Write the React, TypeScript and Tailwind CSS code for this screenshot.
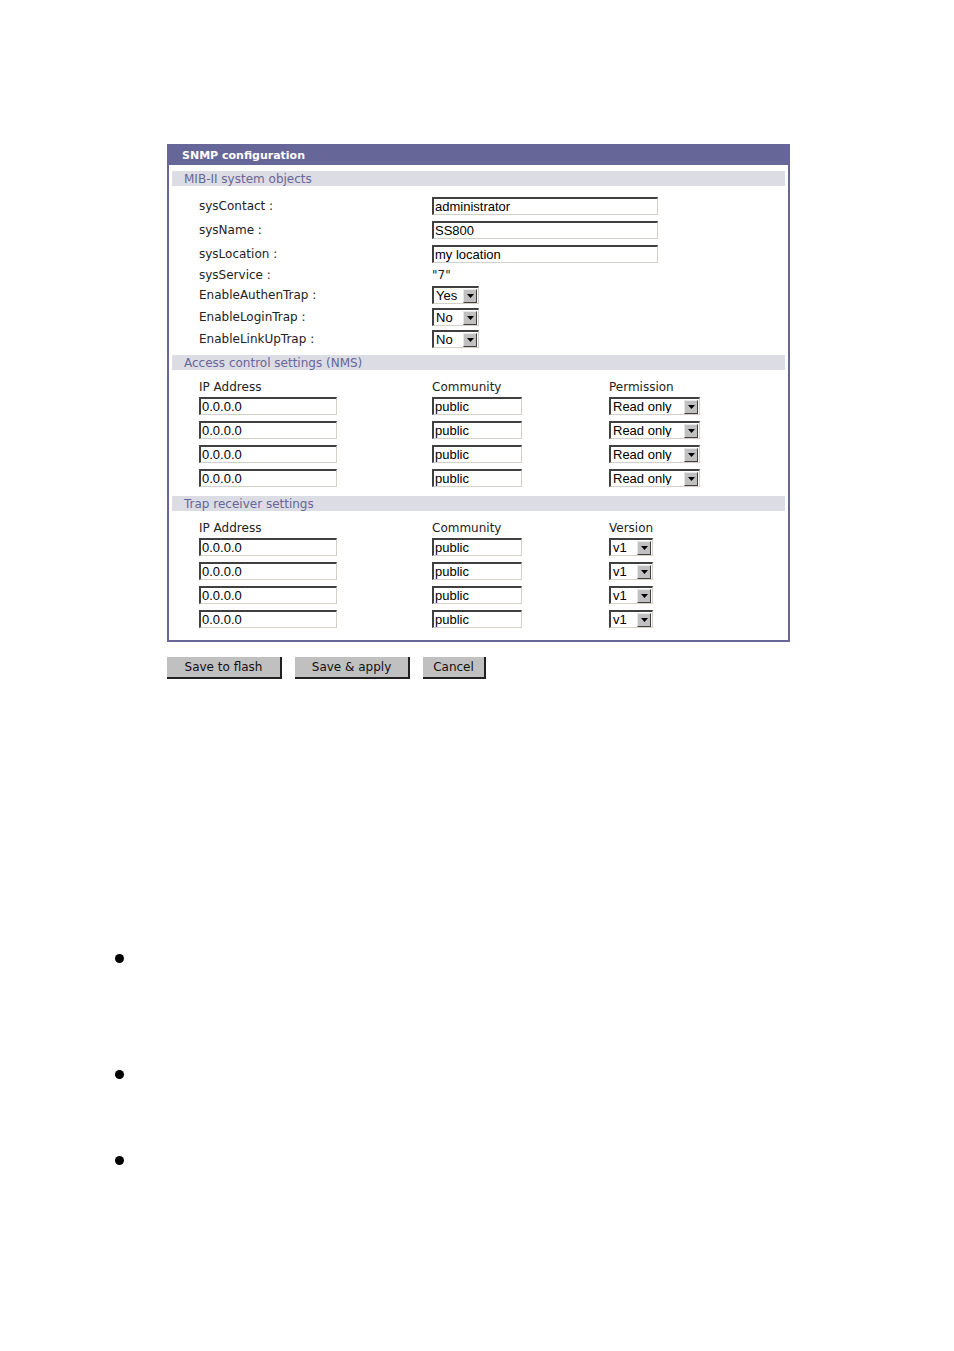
const label = "font-['DejaVu_Sans',sans-serif] text-[12px] text-[#222]";

function TextBox({ value, w }: { value: string; w: string }) {
  return (
    <div
      className={`${w} h-[18px] bg-white border-t-2 border-l-2 border-b border-r border-t-[#404040] border-l-[#404040] border-b-[#d4d0c8] border-r-[#d4d0c8] pl-[1px] flex items-center font-['Liberation_Sans',sans-serif] text-[13px] text-black leading-none overflow-hidden whitespace-nowrap`}
    >
      {value}
    </div>
  );
}

function Select({ value, w }: { value: string; w: string }) {
  return (
    <div
      className={`${w} h-[18px] bg-white border-t-2 border-l-2 border-b border-r border-t-[#404040] border-l-[#404040] border-b-[#d4d0c8] border-r-[#d4d0c8] flex items-center font-['Liberation_Sans',sans-serif] text-[13px] text-black leading-none`}
    >
      <span className="flex-1 pl-[2px] whitespace-nowrap overflow-hidden">{value}</span>
      <span className="w-[14px] h-[14px] mr-[1px] bg-[#c0c0c0] border-t border-l border-t-[#e8e8e8] border-l-[#e8e8e8] border-b border-r border-b-[#404040] border-r-[#404040] flex items-center justify-center">
        <svg width="7" height="4" viewBox="0 0 7 4">
          <polygon points="0,0 7,0 3.5,4" fill="#000" />
        </svg>
      </span>
    </div>
  );
}

function SectionBar({ title }: { title: string }) {
  return (
    <div className="h-[15px] bg-[#dcdce4] pl-[12px] flex items-center font-['DejaVu_Sans',sans-serif] text-[12px] text-[#666699] leading-none">
      {title}
    </div>
  );
}

function Button({ text, w }: { text: string; w: string }) {
  return (
    <div
      className={`${w} h-[22px] bg-[#c0c0c0] border-r-2 border-b-2 border-r-[#202020] border-b-[#202020] flex items-center justify-center font-['DejaVu_Sans',sans-serif] text-[12px] text-[#111]`}
    >
      {text}
    </div>
  );
}

const sysRows = [
  { l: "sysContact :", v: "administrator" },
  { l: "sysName :", v: "SS800" },
  { l: "sysLocation :", v: "my location" },
];

const trapRows = [
  { l: "EnableAuthenTrap :", v: "Yes" },
  { l: "EnableLoginTrap :", v: "No" },
  { l: "EnableLinkUpTrap :", v: "No" },
];

function Table({ third, thirdVal, thirdW }: { third: string; thirdVal: string; thirdW: string }) {
  return (
    <div className="pl-[30px]">
      <div className="h-[14px] flex items-center">
        <span className={`${label} w-[233px] text-[11px]`}>IP Address</span>
        <span className={`${label} w-[177px] text-[11px]`}>Community</span>
        <span className={`${label} text-[11px]`}>{third}</span>
      </div>
      {[0, 1, 2, 3].map((i) => (
        <div key={i} className="h-[24px] flex items-center">
          <div className="w-[233px]">
            <TextBox value="0.0.0.0" w="w-[138px]" />
          </div>
          <div className="w-[177px]">
            <TextBox value="public" w="w-[90px]" />
          </div>
          <Select value={thirdVal} w={thirdW} />
        </div>
      ))}
    </div>
  );
}

export default function App() {
  return (
    <div className="min-h-[1351px] bg-white">
      <div className="pt-[144px] pl-[167px]">
        <div className="w-[623px] border-2 border-[#666699]">
          <div className="h-[19px] bg-[#666699] pl-[13px] flex items-center font-['DejaVu_Sans',sans-serif] text-[11px] font-bold text-white leading-none">
            SNMP configuration
          </div>
          <div className="px-[3px] pt-[6px] pb-[9px]">
            <SectionBar title="MIB-II system objects" />
            <div className="pl-[27px] pt-[8px]">
              {sysRows.map((r) => (
                <div key={r.l} className="h-[24px] flex items-center">
                  <span className={`${label} w-[233px]`}>{r.l}</span>
                  <TextBox value={r.v} w="w-[226px]" />
                </div>
              ))}
              <div className="h-[18px] flex items-center">
                <span className={`${label} w-[233px]`}>sysService :</span>
                <span className={`${label}`}>"7"</span>
              </div>
              {trapRows.map((r) => (
                <div key={r.l} className="h-[22px] flex items-center">
                  <span className={`${label} w-[233px]`}>{r.l}</span>
                  <Select value={r.v} w="w-[47px]" />
                </div>
              ))}
            </div>
            <div className="mt-[5px]">
              <SectionBar title="Access control settings (NMS)" />
            </div>
            <div className="pt-[10px] -ml-[3px]">
              <Table third="Permission" thirdVal="Read only" thirdW="w-[91px]" />
            </div>
            <div className="mt-[6px]">
              <SectionBar title="Trap receiver settings" />
            </div>
            <div className="pt-[10px] -ml-[3px]">
              <Table third="Version" thirdVal="v1" thirdW="w-[44px]" />
            </div>
          </div>
        </div>
        <div className="mt-[15px] flex gap-[13px]">
          <Button text="Save to flash" w="w-[115px]" />
          <Button text="Save & apply" w="w-[115px]" />
          <Button text="Cancel" w="w-[63px]" />
        </div>
      </div>
      <div className="pl-[115px] pt-[275px]">
        <div className="w-[9px] h-[9px] rounded-full bg-black" />
        <div className="w-[9px] h-[9px] rounded-full bg-black mt-[107px]" />
        <div className="w-[9px] h-[9px] rounded-full bg-black mt-[77px]" />
      </div>
    </div>
  );
}
